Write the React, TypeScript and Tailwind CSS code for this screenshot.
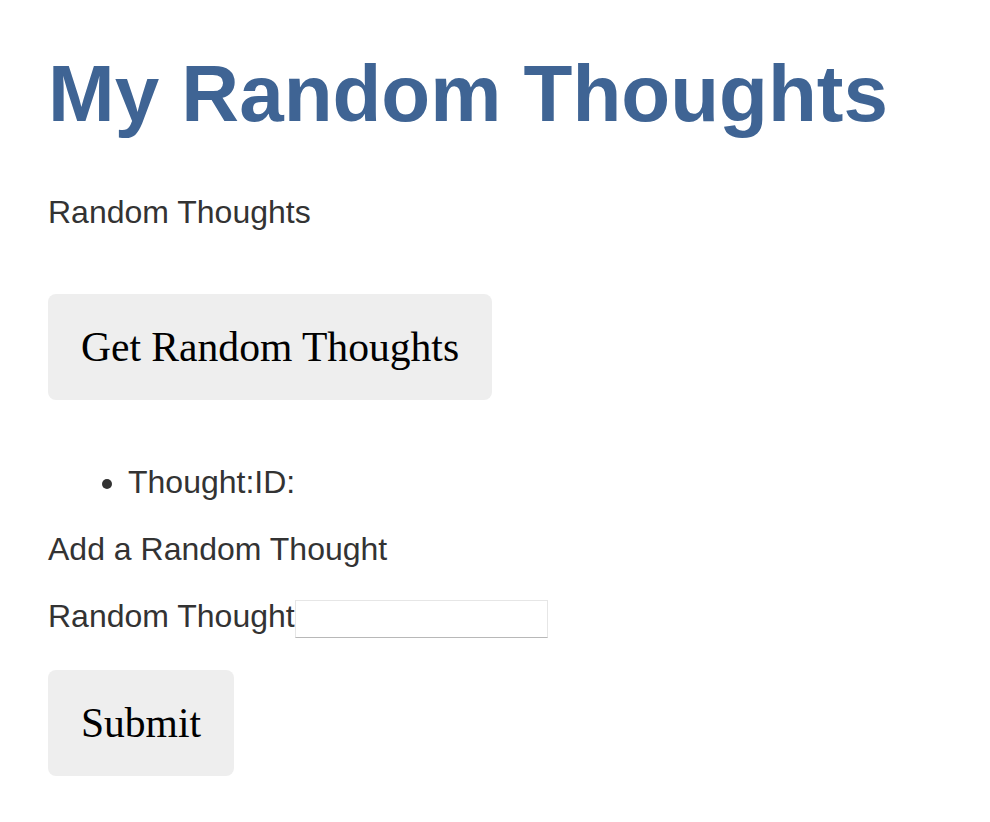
import React from "react";

const sans = "font-['Liberation_Sans',Arial,sans-serif]";
const serif = "font-['Liberation_Serif','Times_New_Roman',serif]";

const GrayButton = ({ label, width }: { label: string; width: string }) => (
  <button
    type="button"
    className={`${serif} ${width} h-[106px] flex items-center justify-center rounded-[8px] bg-[#eeeeee] text-[41.6px] text-black`}
  >
    {label}
  </button>
);

const App = () => {
  return (
    <div className={`${sans} min-h-[822px] bg-white px-[48px] text-[#333333]`}>
      {/* Heading */}
      <h1 className="pt-[48px] text-[80px] leading-[92px] font-bold text-[#3f6494]">
        My Random Thoughts
      </h1>

      <p className="mt-[54px] text-[32px] leading-[37px]">Random Thoughts</p>

      <div className="mt-[63px]">
        <GrayButton label="Get Random Thoughts" width="w-[444px]" />
      </div>

      {/* Thoughts list */}
      <ul className="mt-[64px] list-disc pl-[80px] text-[32px] leading-[37px]">
        <li>Thought:ID:</li>
      </ul>

      {/* Add form */}
      <p className="mt-[30px] text-[32px] leading-[37px]">Add a Random Thought</p>

      <form className="mt-[30px]" onSubmit={(e) => e.preventDefault()}>
        <div className="flex items-start">
          <label htmlFor="thought" className="text-[32px] leading-[37px]">
            Random Thought
          </label>
          <input
            id="thought"
            type="text"
            className="mt-[2px] h-[38px] w-[253px] border border-[#e6e6e6] border-b-[#b8b8b8] bg-white px-2 text-[26px] outline-none"
          />
        </div>
        <div className="mt-[32px]">
          <GrayButton label="Submit" width="w-[186px]" />
        </div>
      </form>
    </div>
  );
};

export default App;
